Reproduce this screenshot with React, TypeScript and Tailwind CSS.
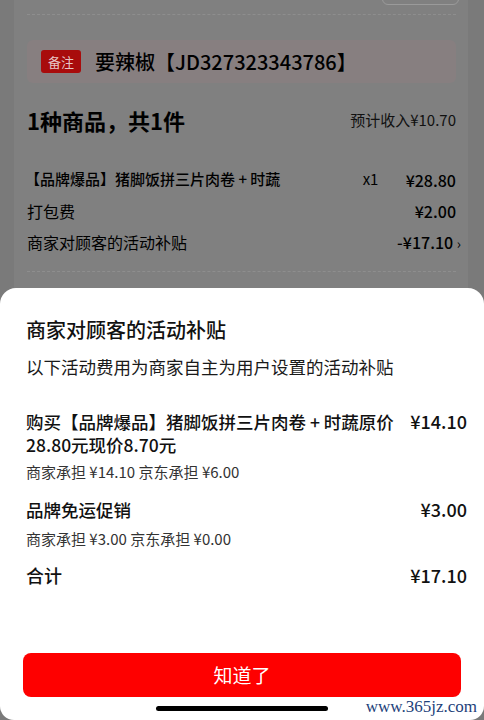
const cjk = { fontFamily: '"Noto Sans CJK SC", "Noto Sans", sans-serif' }

interface Subsidy {
  title: string
  amount: string
  detail: string
}

const subsidies: Subsidy[] = [
  {
    title: '购买【品牌爆品】猪脚饭拼三片肉卷 + 时蔬原价28.80元现价8.70元',
    amount: '¥14.10',
    detail: '商家承担 ¥14.10 京东承担 ¥6.00',
  },
  {
    title: '品牌免运促销',
    amount: '¥3.00',
    detail: '商家承担 ¥3.00 京东承担 ¥0.00',
  },
]

function OrderBackdrop() {
  return (
    <div className="px-[14px] pr-[16px]">
      <div className="bg-[#808080] px-[13px] pr-[12px] pb-[20px]">
        {/* bottom of a button cut off at the top */}
        <div className="flex justify-end h-[5px]">
          <div className="w-[77px] h-[30px] -mt-[25px] mr-[-3px] rounded-[6px] border border-[#9a9a9a]" />
        </div>
        <div className="mt-[9px] border-t border-dashed border-[#8e8e8e]" />

        {/* remark */}
        <div className="mt-[25px] h-[43px] rounded-[6px] bg-[#877f80] flex items-center pl-[14px]">
          <span className="w-[40px] h-[23px] rounded-[3px] bg-[#a80c0c] text-[#e6c6c6] text-[13px] flex items-center justify-center">
            备注
          </span>
          <span className="ml-[14px] text-[20px] font-medium text-black leading-none">
            要辣椒【JD327323343786】
          </span>
        </div>

        <div className="mt-[22px] flex items-center justify-between h-[30px]">
          <span className="text-[22px] font-bold text-black">1种商品，共1件</span>
          <span className="text-[15px] text-[#111]">预计收入¥10.70</span>
        </div>

        <div className="mt-[33px] flex flex-col gap-[8px] text-black">
          <div className="flex items-center h-[23px] -ml-[2px]">
            <span className="flex-1 text-[15px] font-medium">【品牌爆品】猪脚饭拼三片肉卷 + 时蔬</span>
            <span className="text-[15px] w-[43px]">x1</span>
            <span className="text-[16px] font-medium">¥28.80</span>
          </div>
          <div className="flex items-center justify-between h-[23px]">
            <span className="text-[16px]">打包费</span>
            <span className="text-[16px] font-medium">¥2.00</span>
          </div>
          <div className="flex items-center justify-between h-[23px]">
            <span className="text-[16px]">商家对顾客的活动补贴</span>
            <span className="text-[16px] font-medium mr-[-5px]">
              -¥17.10 <span className="text-[14px] font-normal">›</span>
            </span>
          </div>
        </div>

        <div className="mt-[18px] border-t border-dashed border-[#8e8e8e]" />
      </div>
    </div>
  )
}

function SubsidySheet() {
  return (
    <div className="absolute left-0 right-0 bottom-0 h-[432px] bg-white rounded-t-[16px] rounded-b-[14px] flex flex-col pl-[26px] pr-[17px] pt-[28px]">
      <h2 className="text-[20px] font-medium text-[#111] leading-[28px]">商家对顾客的活动补贴</h2>
      <p className="mt-[10px] text-[17.5px] text-[#1a1a1a] leading-[26px]">以下活动费用为商家自主为用户设置的活动补贴</p>

      <div className="mt-[30px]">
        {subsidies.map((s, i) => (
          <div key={i} className={i === 0 ? '' : 'mt-[16px]'}>
            <div className="flex justify-between gap-[8px]">
              <span className="w-[380px] text-[17.5px] font-medium text-[#111] leading-[23px]">{s.title}</span>
              <span className="shrink-0 text-[18px] font-medium text-[#111] leading-[23px]">{s.amount}</span>
            </div>
            <div className={'text-[15px] text-[#333] leading-[20px] ' + (i === 0 ? 'mt-[6px]' : 'mt-[8px]')}>
              {s.detail}
            </div>
          </div>
        ))}
        <div className="mt-[15px] flex justify-between text-[18px] font-medium text-[#111] leading-[23px]">
          <span>合计</span>
          <span>¥17.10</span>
        </div>
      </div>

      <button className="mt-auto -ml-[3px] mr-[6px] h-[44px] rounded-[8px] bg-[#fe0000] text-white text-[19px]">
        知道了
      </button>
      <div className="mt-[9px] mb-[9px] flex justify-center -ml-[9px]">
        <div className="w-[172px] h-[5px] rounded-full bg-black" />
      </div>

      <span
        className="absolute right-[7px] bottom-[5px] text-[17px] text-[#1d3f7a] leading-none"
        style={{ fontFamily: '"Liberation Serif", serif' }}
      >
        www.365jz.com
      </span>
    </div>
  )
}

export default function App() {
  return (
    <div className="relative h-[720px] w-full overflow-hidden bg-[#7a7a7a]" style={cjk}>
      <OrderBackdrop />
      <SubsidySheet />
    </div>
  )
}
